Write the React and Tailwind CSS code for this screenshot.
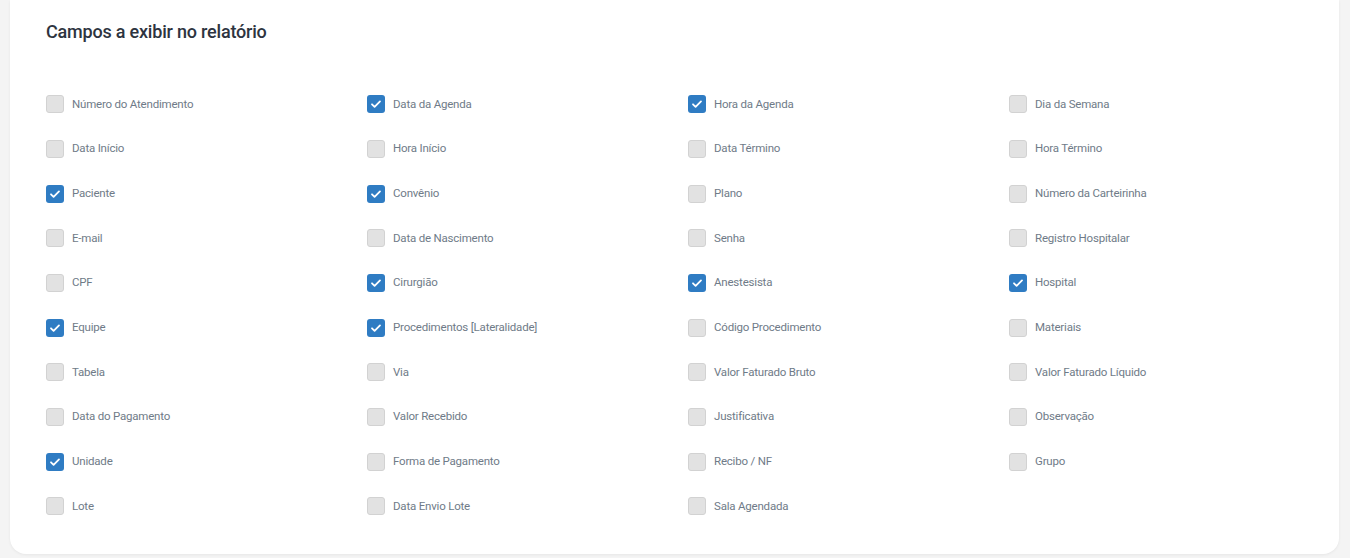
import React from "react";

// Campos do relatório, na ordem da grade (4 colunas, linha a linha).
const CAMPOS = [
  ["Número do Atendimento", false],
  ["Data da Agenda", true],
  ["Hora da Agenda", true],
  ["Dia da Semana", false],
  ["Data Início", false],
  ["Hora Início", false],
  ["Data Término", false],
  ["Hora Término", false],
  ["Paciente", true],
  ["Convênio", true],
  ["Plano", false],
  ["Número da Carteirinha", false],
  ["E-mail", false],
  ["Data de Nascimento", false],
  ["Senha", false],
  ["Registro Hospitalar", false],
  ["CPF", false],
  ["Cirurgião", true],
  ["Anestesista", true],
  ["Hospital", true],
  ["Equipe", true],
  ["Procedimentos [Lateralidade]", true],
  ["Código Procedimento", false],
  ["Materiais", false],
  ["Tabela", false],
  ["Via", false],
  ["Valor Faturado Bruto", false],
  ["Valor Faturado Líquido", false],
  ["Data do Pagamento", false],
  ["Valor Recebido", false],
  ["Justificativa", false],
  ["Observação", false],
  ["Unidade", true],
  ["Forma de Pagamento", false],
  ["Recibo / NF", false],
  ["Grupo", false],
  ["Lote", false],
  ["Data Envio Lote", false],
  ["Sala Agendada", false],
];

function Checkbox({ checked }) {
  if (checked) {
    return (
      <span className="flex h-[18px] w-[18px] shrink-0 items-center justify-center rounded-[3px] bg-[#2f7cc3]">
        <svg width="12" height="12" viewBox="0 0 12 12" fill="none">
          <path d="M2 6.3l2.6 2.6L10 3.4" stroke="#fff" strokeWidth="1.8" strokeLinecap="round" strokeLinejoin="round" />
        </svg>
      </span>
    );
  }
  return <span className="h-[18px] w-[18px] shrink-0 rounded-[3px] border border-[#d2d2d2] bg-[#e2e2e2]" />;
}

export default function App() {
  return (
    <div className="h-[558px] overflow-hidden bg-[#f4f4f4] font-['Roboto',sans-serif]">
      <div className="ml-[10px] w-[1329px] rounded-b-2xl bg-white pl-[36px] pt-[21px] pb-[25px] shadow-[0_1px_3px_rgba(0,0,0,0.06)]">
        <h2 className="text-[18px] font-medium leading-[22px] tracking-[-0.2px] text-[#2d3440]">
          Campos a exibir no relatório
        </h2>
        <div className="mt-[39px] grid grid-cols-[repeat(4,321px)]">
          {CAMPOS.map(([nome, marcado]) => (
            <label key={nome} className="flex h-[44.67px] items-center gap-[8px]">
              <Checkbox checked={marcado} />
              <span className="text-[11.5px] tracking-[-0.2px] text-[#6f7b88]">{nome}</span>
            </label>
          ))}
        </div>
      </div>
    </div>
  );
}
